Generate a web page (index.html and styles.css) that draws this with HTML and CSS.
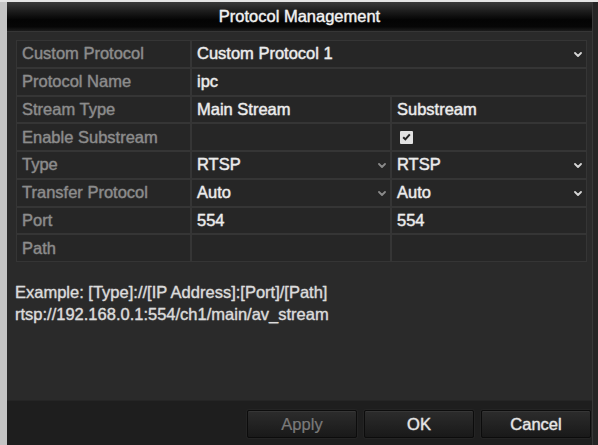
FILE: index.html
```html
<!DOCTYPE html>
<html>
<head>
<meta charset="utf-8">
<link rel="stylesheet" href="styles.css">
</head>
<body>
<div class="dialog">
  <div class="titlebar">Protocol Management</div>
  <div class="content">
    <div class="grid">
      <div class="cell label">Custom Protocol</div>
      <div class="cell value wide select">Custom Protocol 1
        <svg class="chev light" width="8" height="5" viewBox="0 0 8 5"><polyline points="1,1 4,4 7,1"/></svg>
      </div>

      <div class="cell label">Protocol Name</div>
      <div class="cell value wide">ipc</div>

      <div class="cell label">Stream Type</div>
      <div class="cell value">Main Stream</div>
      <div class="cell value">Substream</div>

      <div class="cell label">Enable Substream</div>
      <div class="cell value"></div>
      <div class="cell value">
        <span class="checkbox">
          <svg width="9" height="8" viewBox="0 0 9 8"><polyline points="1.2,4.2 3.4,6.4 7.8,1.4"/></svg>
        </span>
      </div>

      <div class="cell label">Type</div>
      <div class="cell value select">RTSP
        <svg class="chev dim" width="8" height="5" viewBox="0 0 8 5"><polyline points="1,1 4,4 7,1"/></svg>
      </div>
      <div class="cell value select">RTSP
        <svg class="chev light" width="8" height="5" viewBox="0 0 8 5"><polyline points="1,1 4,4 7,1"/></svg>
      </div>

      <div class="cell label">Transfer Protocol</div>
      <div class="cell value select">Auto
        <svg class="chev dim" width="8" height="5" viewBox="0 0 8 5"><polyline points="1,1 4,4 7,1"/></svg>
      </div>
      <div class="cell value select">Auto
        <svg class="chev light" width="8" height="5" viewBox="0 0 8 5"><polyline points="1,1 4,4 7,1"/></svg>
      </div>

      <div class="cell label">Port</div>
      <div class="cell value">554</div>
      <div class="cell value">554</div>

      <div class="cell label">Path</div>
      <div class="cell value"></div>
      <div class="cell value"></div>
    </div>

    <div class="example">
      <p>Example: [Type]://[IP Address]:[Port]/[Path]</p>
      <p>rtsp://192.168.0.1:554/ch1/main/av_stream</p>
    </div>
  </div>
  <div class="footer">
    <button class="btn disabled">Apply</button>
    <button class="btn">OK</button>
    <button class="btn">Cancel</button>
  </div>
</div>
</body>
</html>
```

FILE: styles.css
```css
html, body {
  margin: 0;
  padding: 0;
}

body {
  width: 598px;
  height: 445px;
  overflow: hidden;
  background:
    linear-gradient(#e4e4e4 0 2px, transparent 2px),
    linear-gradient(to right, #c4c4c4 0 7px, #252525 7px);
  font-family: "Liberation Sans", Arial, sans-serif;
  font-size: 16.5px;
}

.dialog {
  margin: 2px 0 0 7px;
  width: 585px;
  height: 443px;
  border-right: 1px solid #383838;
  background: #2a2a2a;
  display: flex;
  flex-direction: column;
}

.titlebar {
  height: 29px;
  flex: none;
  border-bottom: 1px solid #363636;
  background: linear-gradient(#3a3a3a 0%, #1e1e1e 30%, #040404 62%, #060606 85%, #1c1c1c 100%);
  color: #f2f2f2;
  display: flex;
  align-items: center;
  justify-content: center;
  -webkit-text-stroke: 0.3px #f2f2f2;
  text-shadow: 0 0 1.5px rgba(255,255,255,0.35);
}

.content {
  flex: 1;
  padding: 8px 5px 0 9px;
}

.grid {
  display: grid;
  grid-template-columns: 173px 198px 1fr;
  grid-auto-rows: 25.75px;
  gap: 2px;
  padding: 1px;
  background: #353535;
}

.cell {
  background: #262626;
  display: flex;
  align-items: center;
  padding: 0 4px 0 5px;
  white-space: nowrap;
}

.label {
  color: #8c8c8c;
  -webkit-text-stroke: 0.3px #8c8c8c;
  text-shadow: 0 0 1.5px rgba(160,160,160,0.35);
}

.value {
  color: #ececec;
  -webkit-text-stroke: 0.35px #ececec;
  text-shadow: 0 0 1.5px rgba(255,255,255,0.35);
}

.wide {
  grid-column: span 2;
}

.select {
  justify-content: space-between;
}

.chev {
  fill: none;
  stroke-width: 1.8;
  stroke-linecap: round;
  stroke-linejoin: round;
  margin-top: 2px;
}

.chev.light { stroke: #d6d6d6; }
.chev.dim { stroke: #8a8a8a; }

.checkbox {
  width: 13px;
  height: 13px;
  margin-left: 3px;
  background: #e2e2e2;
  border-radius: 1px;
  display: flex;
  align-items: center;
  justify-content: center;
}

.checkbox svg {
  fill: none;
  stroke: #222;
  stroke-width: 2;
}

.example {
  margin: 19px 0 0 -1px;
  color: #dcdcdc;
  line-height: 22px;
  -webkit-text-stroke: 0.3px #dcdcdc;
  text-shadow: 0 0 1.5px rgba(255,255,255,0.3);
}

.example p {
  margin: 0;
}

.footer {
  flex: none;
  height: 35px;
  padding: 9px 1px 0 0;
  background: #1e1e1e;
  border-top: 1px solid #252525;
  display: flex;
  justify-content: flex-end;
  gap: 7px;
}

.btn {
  width: 110px;
  height: 28px;
  font-family: inherit;
  font-size: 16.5px;
  color: #e6e6e6;
  background: linear-gradient(#2c2c2c, #191919);
  border: 1px solid #0c0c0c;
  border-radius: 2px;
  box-shadow: inset 0 1px 0 #363636, 0 0 0 1px #242424;
  -webkit-text-stroke: 0.3px #e6e6e6;
  text-shadow: 0 0 1.5px rgba(255,255,255,0.35);
  padding: 0;
}

.btn.disabled {
  color: #7a7a7a;
  -webkit-text-stroke: 0.2px #7a7a7a;
  text-shadow: none;
}
```
